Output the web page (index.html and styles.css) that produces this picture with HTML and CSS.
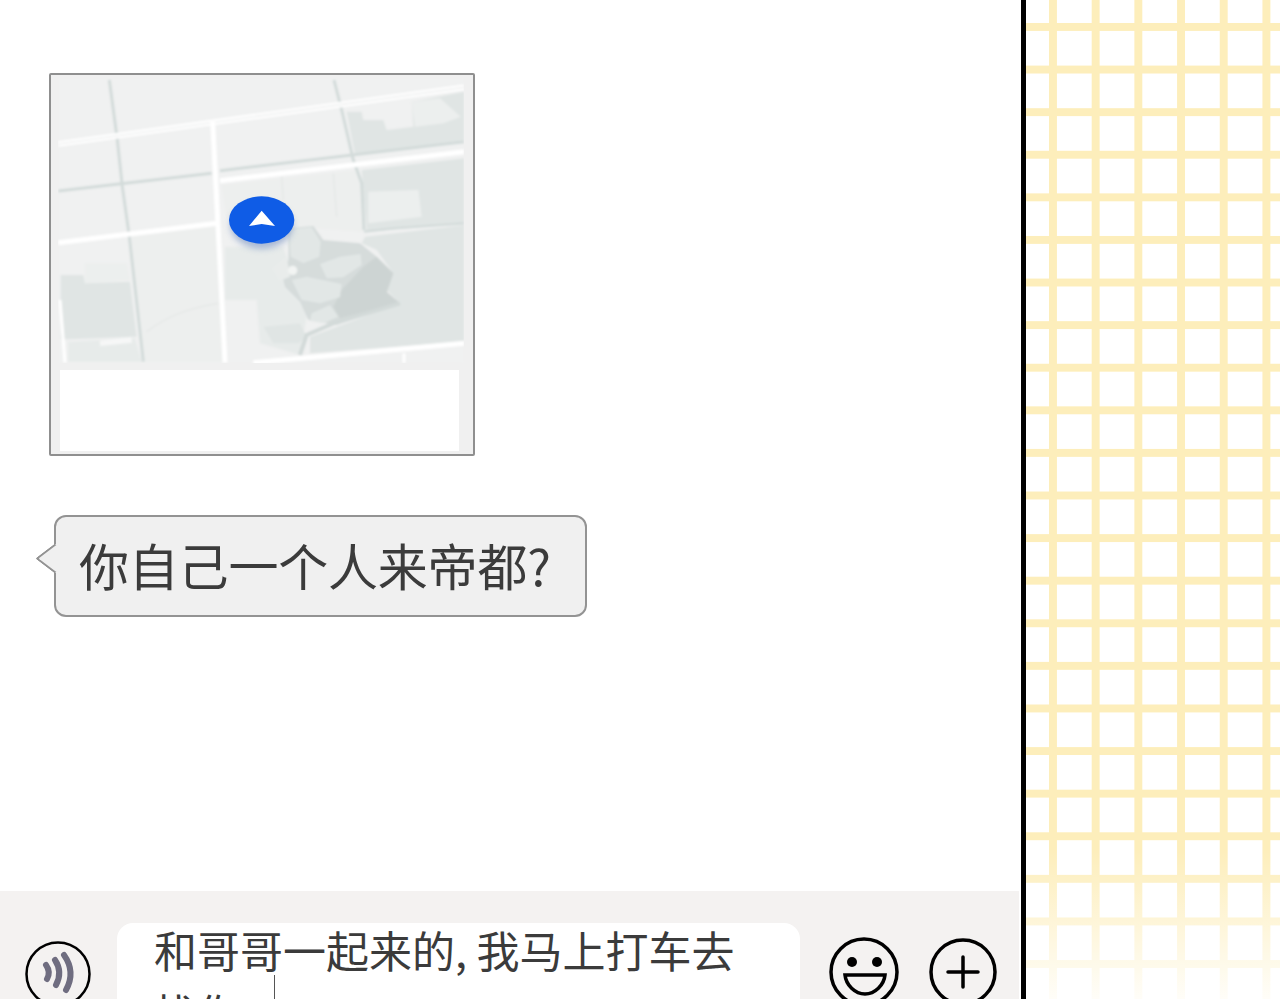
FILE: index.html
```html
<!DOCTYPE html>
<html lang="zh">
  <head>
    <meta charset="utf-8">
    <title>聊天</title>
    <link rel="stylesheet" href="styles.css">
  </head>
  <body>
    <div class="page">
      <div class="chat">
        <div class="messages">
          <div class="map-card">
            <svg class="map" viewBox="54 54 1218 855" aria-hidden="true">
              <defs>
                <filter id="soft"><feGaussianBlur stdDeviation="2.5"/></filter>
                <filter id="pin-shadow" x="-30%" y="-30%" width="160%" height="170%"><feGaussianBlur stdDeviation="9"/></filter>
              </defs>
              <g filter="url(#soft)">
                <rect class="land" x="54" y="54" width="1218" height="855"/>
                <!-- park blocks -->
                <path class="land-dim" d="M275 530L530 500L555 905L310 905Z"/>
                <path class="park" d="M555 560L730 560L800 770L780 885L660 850L650 720L555 720Z"/>
                <path class="land-dim" d="M545 375L960 330L975 515L760 500L700 450L560 470Z"/>
                <path class="green" d="M920 155L965 155L970 180L1030 180L1040 210L1120 200L1115 125L1272 95L1272 240L945 285Z"/>
                <path class="pale" d="M1115 125L1200 115L1262 170L1210 190L1125 200Z"/>
                <path class="green" d="M965 330L1272 295L1272 490L980 515Z"/>
                <path class="pale" d="M985 395L1135 390L1145 470L985 490Z"/>
                <path class="green" d="M975 530L1272 495L1272 845L810 880L810 830L1080 730L1040 690L1060 640L1010 570L965 550Z"/>
                <path class="green" d="M670 800L780 790L800 830L775 850L700 850Z"/>
                <path class="green" d="M62 645L130 645L135 670L270 665L290 830L90 838L62 838Z"/>
                <path class="pale-green" d="M85 845L285 835L305 905L85 905Z"/>
                <path class="pale" d="M135 610L160 610L260 610L270 660L135 670Z"/>
                <path class="road-faint" d="M180 850L275 840"/>
                <!-- lake -->
                <path class="lake" d="M745 505L820 498L850 540L960 550L1010 590L1060 640L1040 700L1080 730L890 795L805 780L780 725L735 680L725 640L745 600Z"/>
                <path class="lake-dark" d="M905 690L970 620L1010 590L1060 640L1040 695L1080 730L900 775L880 740Z"/>
                <path class="lobe" d="M748 508L815 502L842 545L838 590L790 610L752 590Z"/>
                <path class="lobe" d="M840 612L900 590L962 582L965 615L910 652L860 655Z"/>
                <path class="lobe" d="M755 660L800 650L905 672L900 712L840 730L785 720Z"/>
                <path class="lobe" d="M815 760L870 735L895 770L850 790L810 782Z"/>
                <path class="lobe-pale" d="M698 625L740 590L750 650L720 662Z"/>
                <circle class="isle" cx="758" cy="631" r="14"/>
                <path class="lake-edge" d="M780 885L800 825L880 790L1080 730"/>
                <path class="thin" d="M320 815C380 770 440 745 535 730"/>
                <path class="thin" d="M725 350L730 420"/>
                <path class="thin" d="M880 340L890 470"/>
                <!-- small roads -->
                <path class="street" d="M208 60L232 240L247 380L268 530L310 905"/>
                <path class="street" d="M882 60L905 150L940 300L965 370L972 510"/>
                <path class="street" d="M55 393L515 340"/>
                <path class="street" d="M540 332L1272 245"/>
                <path class="street-thin" d="M972 515L1060 505L1272 490"/>
                <!-- main roads -->
                <path class="double" d="M55 252L1272 82"/>
                <path class="double-mid" d="M55 252L1272 82"/>
                <path class="road" d="M518 185L555 908"/>
                <path class="road" d="M540 362L1272 275"/>
                <path class="road" d="M55 548L530 490"/>
                <path class="road" d="M640 908L1272 850"/>
                <path class="road-thin" d="M60 720L75 908"/>
                <path class="road-thin" d="M1092 880L1092 909"/>
              </g>
              <ellipse class="pin-shadow" cx="665" cy="496" rx="94" ry="70" filter="url(#pin-shadow)"/>
              <ellipse class="pin" cx="665" cy="480" rx="98" ry="71"/>
              <path class="arrow" d="M665 452L705 498L665 492L627 498Z"/>
            </svg>
            <div class="map-caption"></div>
          </div>

          <div class="bubble">你自己一个人来帝都?</div>
        </div>

        <div class="input-bar">
          <svg class="round-icon voice" viewBox="0 0 66 66" aria-hidden="true">
            <circle cx="33" cy="33" r="31.5"/>
            <path class="wave" d="M21 24Q26 31 22 38"/>
            <path class="wave" d="M30 19Q38 31 31 44"/>
            <path class="wave" d="M39 14Q51 31 41 49"/>
          </svg>
          <div class="input-box">
            <div class="input-text">和哥哥一起来的, 我马上打车去<br>找你</div>
            <span class="caret"></span>
          </div>
          <svg class="round-icon smile" viewBox="0 0 70 70" aria-hidden="true">
            <circle cx="35" cy="35" r="33"/>
            <circle class="eye" cx="23" cy="25" r="5"/>
            <circle class="eye" cx="48" cy="25" r="5"/>
            <path d="M16 38H56C55 48 46 57 36 57C26 57 17 48 16 38Z"/>
          </svg>
          <svg class="round-icon plus" viewBox="0 0 68 68" aria-hidden="true">
            <circle cx="34" cy="34" r="32"/>
            <path d="M34 19V49M19 34H49"/>
          </svg>
        </div>
      </div>

      <div class="grid-panel"></div>
    </div>
  </body>
</html>
```

FILE: styles.css
```css
html, body {
  margin: 0;
  height: 100%;
  background: #fff;
}

.page {
  display: flex;
  height: 999px;
  overflow: hidden;
  font-family: "Noto Sans CJK SC", "Liberation Sans", sans-serif;
  color: #3b3b3b;
}

.chat {
  width: 1019px;
  flex: none;
  display: flex;
  flex-direction: column;
}

.messages {
  flex: 1;
  padding: 73px 0 0 49px;
}

.map-card {
  box-sizing: border-box;
  width: 426px;
  height: 383px;
  padding: 3px 14px 3px 9px;
  border: 2px solid #8f8f8f;
  border-radius: 2px;
  background: #f0f0f0;
}

.map {
  display: block;
  width: 406px;
  height: 285px;
  margin-left: -2px;
}

.land { fill: #f0f1f1; }
.land-dim { fill: #edefee; }
.park { fill: #e7ebea; }
.green { fill: #e0e5e4; }
.pale { fill: #ecefee; }
.pale-green { fill: #e7ebea; }
.lake { fill: #d6dcdb; }
.lake-dark { fill: #cdd4d3; }
.lobe { fill: #e2e7e6; }
.lobe-pale { fill: #e9eceb; }
.isle { fill: #f2f4f3; }
.lake-edge { fill: none; stroke: #d3dad9; stroke-width: 12; }
.thin { fill: none; stroke: #e4e7e6; stroke-width: 4; }
.street { fill: none; stroke: #d3dbda; stroke-width: 9; }
.street-thin { fill: none; stroke: #d3dbda; stroke-width: 7; }
.road { fill: none; stroke: #fff; stroke-width: 15; }
.road-thin { fill: none; stroke: #fff; stroke-width: 9; }
.road-faint { fill: none; stroke: #f6f7f7; stroke-width: 16; }
.double { fill: none; stroke: #fff; stroke-width: 17; }
.double-mid { fill: none; stroke: #f0f1f1; stroke-width: 5; }
.pin { fill: #0f5ce6; }
.pin-shadow { fill: #5f7fb8; opacity: 0.5; }
.arrow { fill: #fff; }

.map-caption {
  width: 399px;
  height: 81px;
  margin-top: 7px;
  background: #fff;
}

.bubble {
  position: relative;
  box-sizing: border-box;
  width: 533px;
  height: 102px;
  margin: 59px 0 0 5px;
  padding-left: 23px;
  border: 2px solid #939393;
  border-radius: 12px;
  background: #f0f0f0;
  font-size: 50px;
  letter-spacing: -0.2px;
  line-height: 94px;
  white-space: nowrap;
}

/* the little tail on the left of the bubble */
.bubble::before {
  content: "";
  position: absolute;
  left: -12px;
  top: 31px;
  box-sizing: border-box;
  width: 21px;
  height: 21px;
  border-left: 2px solid #939393;
  border-bottom: 2px solid #939393;
  border-bottom-left-radius: 3px;
  background: #f0f0f0;
  transform: scaleX(1.32) rotate(45deg);
}

.input-bar {
  flex: none;
  height: 108px;
  display: flex;
  align-items: flex-start;
  background: #f4f2f1;
}

.round-icon {
  flex: none;
  fill: none;
  stroke: #000;
  stroke-width: 3.5;
}

.voice {
  width: 66px;
  height: 66px;
  margin: 50px 0 0 25px;
  stroke-width: 2.5;
}

.voice .wave {
  stroke: #6f6d80;
  stroke-width: 6;
  stroke-linecap: round;
}

.input-box {
  position: relative;
  box-sizing: border-box;
  width: 683px;
  height: 140px;
  margin: 32px 0 0 26px;
  padding: 0 0 0 37px;
  border-radius: 16px;
  background: #fff;
}

.input-text {
  margin-top: -5px;
  font-size: 43px;
  line-height: 63px;
  white-space: nowrap;
}

.caret {
  position: absolute;
  left: 157px;
  top: 52px;
  width: 1px;
  height: 40px;
  background: #555;
}

.smile {
  width: 70px;
  height: 70px;
  margin: 46px 0 0 29px;
}

.smile .eye {
  fill: #000;
  stroke: none;
}

.plus {
  width: 68px;
  height: 68px;
  margin: 47px 0 0 30px;
}

.plus path {
  stroke-linecap: round;
}

.grid-panel {
  position: relative;
  flex: 1;
  margin-left: 2px;
  border-left: 5px solid #000;
  background-color: #fff;
  background-image:
    linear-gradient(90deg, #fdeebb 8px, transparent 8px),
    linear-gradient(#fdeebb 8px, transparent 8px);
  background-size: 42.7px 100%, 100% 42.6px;
  background-position: 23px 0, 0 23px;
}

/* grid fades out towards the bottom edge */
.grid-panel::after {
  content: "";
  position: absolute;
  left: 0;
  right: 0;
  bottom: 0;
  height: 150px;
  background: linear-gradient(rgba(255, 255, 255, 0), rgba(255, 255, 255, 0.9));
}
```
